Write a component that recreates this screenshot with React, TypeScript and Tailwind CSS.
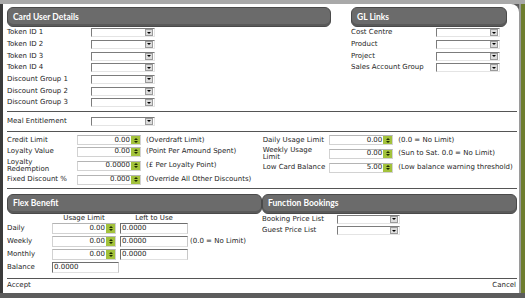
import React from "react";

const label = "text-[7px] leading-[7px] text-[#1e1e1e]";

function Header({ title, className = "" }: { title: string; className?: string }) {
  return (
    <div
      className={`h-[20px] flex items-center pl-[5px] rounded-[6px] bg-[#6b6b6b] border border-[#4a4a4a] shadow-[inset_0_-2px_0_#5a5a5a] text-white font-['Lato',sans-serif] font-bold text-[8.5px] ${className}`}
    >
      {title}
    </div>
  );
}

function Select({ w = 64 }: { w?: number }) {
  return (
    <div
      className="h-[9px] flex bg-white border-t border-l border-[#7c7c7c] border-r border-b border-r-[#e4e4e4] border-b-[#e4e4e4]"
      style={{ width: w }}
    >
      <div className="flex-1" />
      <div className="w-[8px] h-[7px] mr-[1px] bg-[#dcdcdc] border border-[#9a9a9a] flex items-center justify-center">
        <div className="w-0 h-0 border-l-[2px] border-r-[2px] border-t-[2px] border-l-transparent border-r-transparent border-t-black" />
      </div>
    </div>
  );
}

function Spin({ value, w = 64, h = 10 }: { value: string; w?: number; h?: number }) {
  return (
    <div
      className="flex bg-white border border-[#d2d2d2] border-t-[#b4b4b4]"
      style={{ width: w, height: h }}
    >
      <div className={`flex-1 flex items-center justify-end pr-[1px] ${label}`}>{value}</div>
      <div className="w-[9px] bg-[#a3c23c] flex flex-col items-center justify-center gap-[1px]">
        <div className="w-0 h-0 border-l-[2.5px] border-r-[2.5px] border-b-[2.5px] border-l-transparent border-r-transparent border-b-[#1d2a00]" />
        <div className="w-0 h-0 border-l-[2.5px] border-r-[2.5px] border-t-[2.5px] border-l-transparent border-r-transparent border-t-[#1d2a00]" />
      </div>
    </div>
  );
}

function Plain({ value, w }: { value: string; w: number }) {
  return (
    <div
      className={`h-[11px] flex items-center pl-[1px] bg-white border-t border-l border-[#6e6e6e] border-r border-b border-r-[#c8c8c8] border-b-[#e0e0e0] ${label}`}
      style={{ width: w }}
    >
      {value}
    </div>
  );
}

function SelectRow({ text, lw }: { text: string; lw: number }) {
  return (
    <div className="h-[11.67px] flex items-center">
      <div className={`whitespace-nowrap ${label}`} style={{ width: lw }}>
        {text}
      </div>
      <Select />
    </div>
  );
}

function Divider() {
  return <div className="h-px bg-[#555]" />;
}

export default function App() {
  return (
    <div className="w-[525px] h-[298px] overflow-hidden bg-[#5c5c5c] flex flex-col font-['DejaVu_Sans',sans-serif]">
      <div className="h-[4px] bg-[#a9a9a9] shrink-0" />
      <div className="flex shrink-0">
        <div className="w-[3px] bg-[#3b3b3b]" />
        <div className="w-[516px] h-[289px] bg-white rounded-tr-[8px] pl-[4px] pr-[2px] pt-[3px] flex flex-col">
          {/* top */}
          <div className="flex">
            <div className="w-[324px]">
              <Header title="Card User Details" />
              {["Token ID 1", "Token ID 2", "Token ID 3", "Token ID 4", "Discount Group 1", "Discount Group 2", "Discount Group 3"].map((t) => (
                <SelectRow key={t} text={t} lw={84} />
              ))}
            </div>
            <div className="ml-[20px] w-[156px]">
              <Header title="GL Links" />
              {["Cost Centre", "Product", "Project", "Sales Account Group"].map((t) => (
                <SelectRow key={t} text={t} lw={85} />
              ))}
            </div>
          </div>
          <div className="mt-[2.5px]">
            <Divider />
          </div>
          <div className="h-[18.5px] flex items-center">
            <div className={`w-[84px] ${label}`}>Meal Entitlement</div>
            <Select />
          </div>
          <Divider />
          {/* limits */}
          <div className="h-[56px] flex pt-[3px]">
            <div className="w-[255.7px] flex flex-col">
              {[
                { t: "Credit Limit", v: "0.00", n: "(Overdraft Limit)", h: 11.5 },
                { t: "Loyalty Value", v: "0.00", n: "(Point Per Amound Spent)", h: 11.5 },
                { t: "Loyalty\nRedemption", v: "0.0000", n: "(£ Per Loyalty Point)", h: 16 },
                { t: "Fixed Discount %", v: "0.000", n: "(Override All Other Discounts)", h: 12.5 },
              ].map((r) => (
                <div key={r.t} className="flex items-center" style={{ height: r.h }}>
                  <div className={`w-[70px] whitespace-pre-line ${label}`}>{r.t}</div>
                  <Spin value={r.v} />
                  <div className={`ml-[5px] whitespace-nowrap ${label}`}>{r.n}</div>
                </div>
              ))}
            </div>
            <div className="flex flex-col">
              {[
                { t: "Daily Usage Limit", v: "0.00", n: "(0.0 = No Limit)", h: 11.5 },
                { t: "Weekly Usage\nLimit", v: "0.00", n: "(Sun to Sat. 0.0 = No Limit)", h: 15 },
                { t: "Low Card Balance", v: "5.00", n: "(Low balance warning threshold)", h: 13.5 },
              ].map((r) => (
                <div key={r.t} className="flex items-center" style={{ height: r.h }}>
                  <div className={`w-[66.6px] whitespace-pre-line ${label}`}>{r.t}</div>
                  <Spin value={r.v} />
                  <div className={`ml-[5px] whitespace-nowrap ${label}`}>{r.n}</div>
                </div>
              ))}
            </div>
          </div>
          <Divider />
          {/* bottom */}
          <div className="h-[89px] flex pt-[5px]">
            <div className="w-[255px] flex flex-col">
              <Header title="Flex Benefit" />
              <div className="h-[9px] flex items-center">
                <div className={`ml-[45px] w-[64px] text-center ${label}`}>Usage Limit</div>
                <div className={`ml-[4px] w-[68px] text-center ${label}`}>Left to Use</div>
              </div>
              {["Daily", "Weekly", "Monthly"].map((t) => (
                <div key={t} className="h-[13px] flex items-start">
                  <div className={`w-[45px] mt-[2px] ${label}`}>{t}</div>
                  <Spin value="0.00" w={64} h={11} />
                  <div className="ml-[4px]">
                    <Plain value="0.0000" w={68} />
                  </div>
                  {t === "Weekly" && <div className={`ml-[2px] mt-[2px] whitespace-nowrap ${label}`}>(0.0 = No Limit)</div>}
                </div>
              ))}
              <div className="h-[13px] flex items-start">
                <div className={`w-[45px] mt-[2px] ${label}`}>Balance</div>
                <Plain value="0.0000" w={67} />
              </div>
            </div>
            <div className="w-[255px] flex flex-col">
              <Header title="Function Bookings" />
              {["Booking Price List", "Guest Price List"].map((t) => (
                <div key={t} className="h-[11.5px] flex items-center">
                  <div className={`w-[75px] ${label}`}>{t}</div>
                  <Select w={63} />
                </div>
              ))}
            </div>
          </div>
          <Divider />
          <div className="h-[13px] flex items-center justify-between pr-[1px]">
            <div className={label}>Accept</div>
            <div className={label}>Cancel</div>
          </div>
        </div>
        <div className="flex-1 bg-[#6e7d2e] border-l-[2px] border-[#9a9a9a]" />
      </div>
    </div>
  );
}
